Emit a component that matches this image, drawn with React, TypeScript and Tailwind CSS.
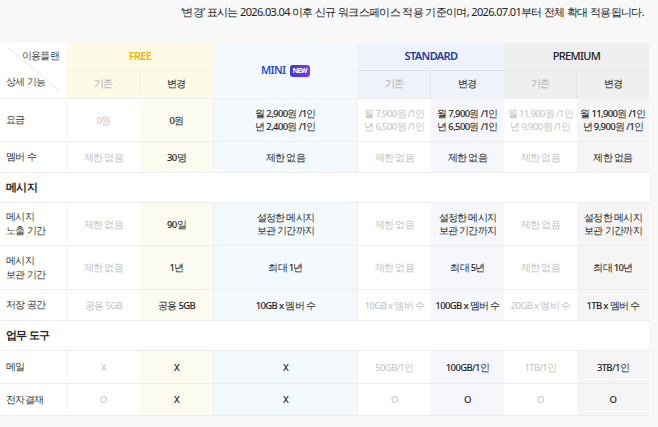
const F = "font-['Noto_Sans_CJK_KR','Noto_Sans',sans-serif]";

type Row = { label: string[]; h: string; cells: string[][] };

const rows: (Row | { section: string })[] = [
  { label: ["요금"], h: "h-[43px]", cells: [["0원"], ["0원"], ["월 2,900원 /1인", "년 2,400원 /1인"], ["월 7,900원 /1인", "년 6,500원 /1인"], ["월 7,900원 /1인", "년 6,500원 /1인"], ["월 11,900원 /1인", "년 9,900원 /1인"], ["월 11,900원 /1인", "년 9,900원 /1인"]] },
  { label: ["멤버 수"], h: "h-[31px]", cells: [["제한 없음"], ["30명"], ["제한 없음"], ["제한 없음"], ["제한 없음"], ["제한 없음"], ["제한 없음"]] },
  { section: "메시지" },
  { label: ["메시지", "노출 기간"], h: "h-[43px]", cells: [["제한 없음"], ["90일"], ["설정한 메시지", "보관 기간까지"], ["제한 없음"], ["설정한 메시지", "보관 기간까지"], ["제한 없음"], ["설정한 메시지", "보관 기간까지"]] },
  { label: ["메시지", "보관 기간"], h: "h-[44px]", cells: [["제한 없음"], ["1년"], ["최대 1년"], ["제한 없음"], ["최대 5년"], ["제한 없음"], ["최대 10년"]] },
  { label: ["저장 공간"], h: "h-[31px]", cells: [["공용 5GB"], ["공용 5GB"], ["10GB x 멤버 수"], ["10GB x 멤버 수"], ["100GB x 멤버 수"], ["20GB x 멤버 수"], ["1TB x 멤버 수"]] },
  { section: "업무 도구" },
  { label: ["메일"], h: "h-[33px]", cells: [["X"], ["X"], ["X"], ["50GB/1인"], ["100GB/1인"], ["1TB/1인"], ["3TB/1인"]] },
  { label: ["전자결재"], h: "h-[32px]", cells: [["O"], ["X"], ["X"], ["O"], ["O"], ["O"], ["O"]] },
];

const widths = ["w-[73px]", "w-[73px]", "w-[145px]", "w-[73px]", "w-[73px]", "w-[73px]", "w-[72px]"];
const bgs = ["bg-white", "bg-[#fcfbf0]", "bg-[#f4f9fe]", "bg-white", "bg-[#f5f7fc]", "bg-white", "bg-[#f5f5f5]"];
const muted = [true, false, false, true, false, true, false];

export default function App() {
  return (
    <div className={`${F} w-[658px] h-[427px] bg-[#f8f8f8] text-[#222] overflow-hidden tracking-[-0.04em]`}>
      <div className="h-[43px] pr-[14px] pt-[4px] text-right text-[11px]">‘변경’ 표시는 2026.03.04 이후 신규 워크스페이스 적용 기준이며, 2026.07.01부터 전체 확대 적용됩니다.</div>
      <div className="w-[649px] bg-white text-[9.5px]">
        {/* header */}
        <div className="flex h-[56px] border-b border-[#eeeeee]">
          <div className="relative w-[67px] text-[9.5px] text-[#444]">
            <svg className="absolute inset-0" width="67" height="56"><line x1="8" y1="5" x2="60" y2="48" stroke="#e5e5e5" /></svg>
            <div className="absolute right-[8px] top-[6px]">이용플랜</div>
            <div className="absolute left-[6px] bottom-[9px]">상세 기능</div>
          </div>
          <div className="w-[146px] flex flex-col bg-[#fdfae6]">
            <div className="h-[28px] flex items-center justify-center font-semibold text-[#f6b500] text-[11px] border-b border-[#f3f0d8]">FREE</div>
            <div className="flex flex-1">
              <div className="w-[73px] flex items-center justify-center text-[#aaa] border-r border-[#f3f0d8]">기존</div>
              <div className="w-[73px] flex items-center justify-center font-medium">변경</div>
            </div>
          </div>
          <div className="w-[145px] flex items-center justify-center gap-1 bg-[#f4f9fe]">
            <span className="font-semibold text-[#1d4ed8] text-[11px]">MINI</span>
            <span className="rounded-[3px] bg-gradient-to-r from-[#4338ca] to-[#7c3aed] px-[3px] text-[7px] font-bold leading-[12px] text-white">NEW</span>
          </div>
          <div className="w-[146px] flex flex-col bg-[#eef2fa]">
            <div className="h-[28px] flex items-center justify-center font-semibold text-[#1e3a9a] text-[11px] border-b border-[#e2e6ef]">STANDARD</div>
            <div className="flex flex-1">
              <div className="w-[73px] flex items-center justify-center text-[#aaa] border-r border-[#e2e6ef]">기존</div>
              <div className="w-[73px] flex items-center justify-center font-medium">변경</div>
            </div>
          </div>
          <div className="w-[145px] flex flex-col bg-[#efefef]">
            <div className="h-[28px] flex items-center justify-center font-medium text-[#222] text-[11px] border-b border-[#e4e4e4]">PREMIUM</div>
            <div className="flex flex-1">
              <div className="w-[73px] flex items-center justify-center text-[#aaa] border-r border-[#e4e4e4]">기존</div>
              <div className="w-[72px] flex items-center justify-center font-medium">변경</div>
            </div>
          </div>
        </div>
        {rows.map((r, i) =>
          "section" in r ? (
            <div key={i} className="h-[30px] flex items-center pl-[6px] text-[10.5px] font-bold border-b border-[#eeeeee]">{r.section}</div>
          ) : (
            <div key={i} className={`flex ${r.h} border-b border-[#eeeeee]`}>
              <div className="w-[67px] flex flex-col justify-center pl-[6px] leading-[14px] text-[#333] border-r border-[#f2f2f2]">
                {r.label.map((l) => <div key={l}>{l}</div>)}
              </div>
              {r.cells.map((c, j) => (
                <div key={j} className={`${widths[j]} ${bgs[j]} flex flex-col items-center justify-center leading-[13px] whitespace-nowrap ${muted[j] ? "text-[#c2c2c2]" : "text-[#222] font-medium"} ${j === 2 ? "border-x border-[#eaf1f8]" : ""}`}>
                  {c.map((t) => <div key={t}>{t}</div>)}
                </div>
              ))}
            </div>
          )
        )}
      </div>
    </div>
  );
}
